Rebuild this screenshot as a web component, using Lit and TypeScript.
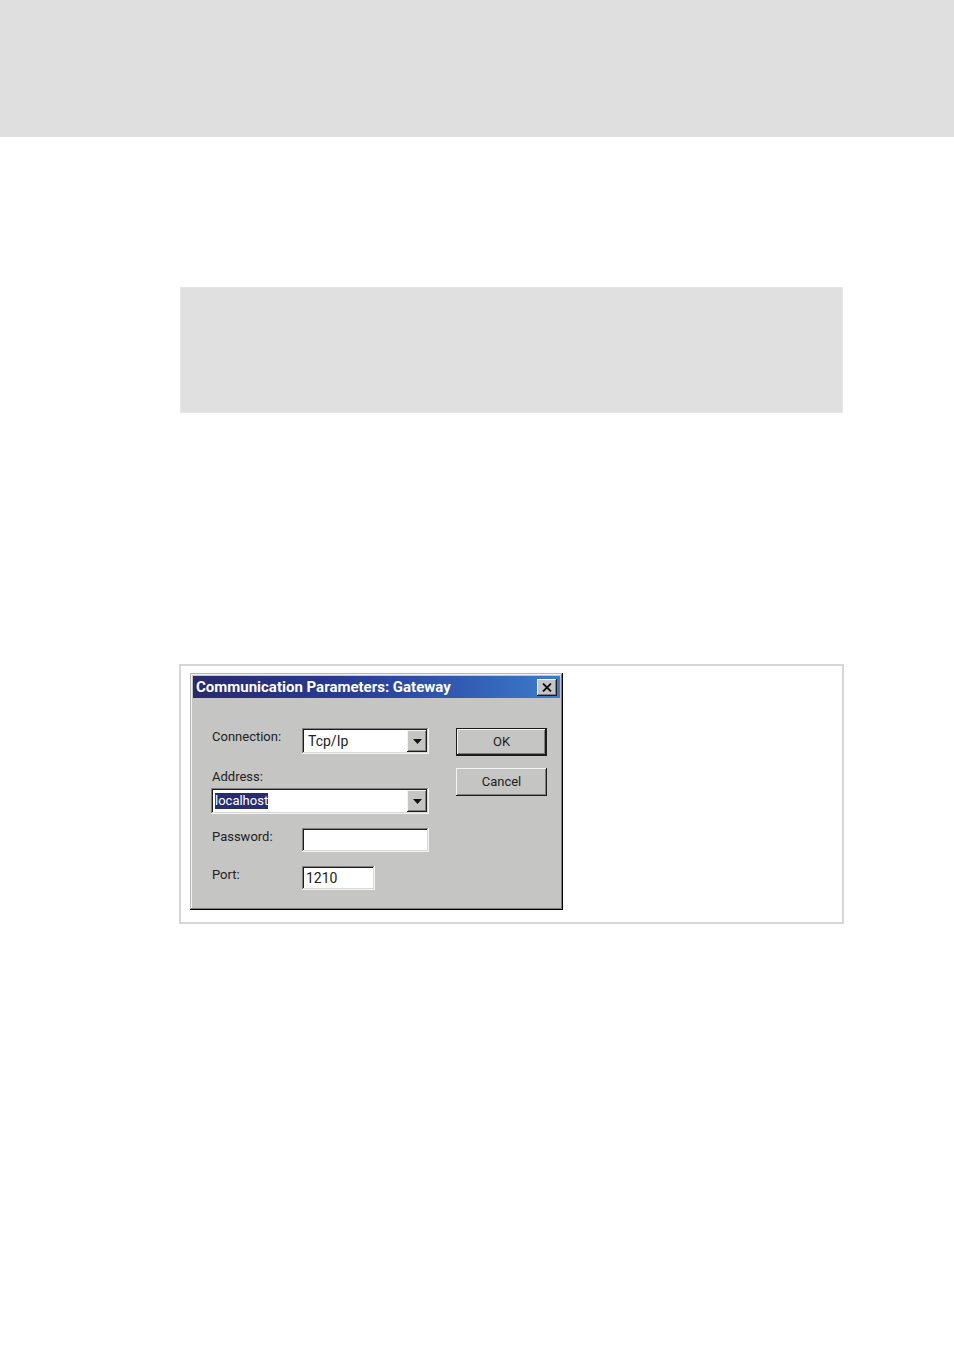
import { LitElement, html, css } from 'lit';
import { customElement, property, query } from 'lit/decorators.js';

const arrow = html`
  <svg width="9" height="5" viewBox="0 0 9 5" aria-hidden="true">
    <path d="M0 0h9L4.5 5z" fill="#111" />
  </svg>
`;

/**
 * Gateway Dialog
 * Classic grey dialog with the communication settings of a gateway
 */
@customElement('gateway-dialog')
export class GatewayDialog extends LitElement {
  static styles = css`
    :host {
      display: block;
      width: max-content;
      --face: #c5c5c3;
      --light: #f4f4f2;
      --shade: #808080;
      --dark: #1c1c1c;
    }

    .dialog {
      box-sizing: border-box;
      padding: 3px;
      background: var(--face);
      color: #222;
      font: 13px/18px Roboto, 'Liberation Sans', sans-serif;
      box-shadow:
        inset -1px -1px #000,
        inset 1px 1px #b4b4b4,
        inset -2px -2px var(--shade),
        inset 2px 2px var(--light);
    }

    .titlebar {
      display: flex;
      align-items: center;
      justify-content: space-between;
      height: 22px;
      padding: 0 3px;
      background: linear-gradient(to right, #282a6c, #283a94 40%, #3058b0 70%, #3c7cca);
    }

    .title {
      margin: 0;
      color: #fff;
      font-size: 15px;
      font-weight: 700;
      line-height: 22px;
    }

    button {
      display: grid;
      place-items: center;
      box-sizing: border-box;
      margin: 0;
      padding: 0;
      border: 0;
      background: var(--face);
      color: inherit;
      font: inherit;
      box-shadow:
        inset -1px -1px var(--dark),
        inset 1px 1px var(--light),
        inset -2px -2px var(--shade);
    }

    .close {
      width: 20px;
      height: 17px;
    }

    .body {
      display: flex;
      gap: 27px;
      padding: 30px 13px 17px 18px;
    }

    .fields {
      display: flex;
      flex-direction: column;
      gap: 14px;
      width: 218px;
    }

    .row {
      display: grid;
      grid-template-columns: 91px minmax(0, 1fr);
      align-items: start;
    }

    .stacked {
      display: grid;
      gap: 2px;
    }

    label {
      padding-left: 1px;
    }

    .field {
      display: flex;
      align-items: center;
      box-sizing: border-box;
      height: 24px;
      padding: 2px;
      background: #fff;
      box-shadow:
        inset -1px -1px var(--light),
        inset 1px 1px var(--shade),
        inset -2px -2px #d8d8d6,
        inset 2px 2px var(--dark);
    }

    .combo {
      height: 26px;
    }

    .port {
      width: 73px;
    }

    input,
    select {
      appearance: none;
      flex: 1;
      box-sizing: border-box;
      min-width: 0;
      margin: 0;
      padding: 0 2px;
      border: 0;
      outline: 0;
      background: none;
      color: inherit;
      font: inherit;
      line-height: 16px;
    }

    select {
      padding: 0 4px;
      font-size: 14px;
    }

    .port input {
      font-size: 14px;
    }

    input::selection {
      background: #282c70;
      color: #fff;
    }

    .drop {
      display: grid;
      place-items: center;
      align-self: stretch;
      width: 20px;
      background: var(--face);
      box-shadow:
        inset -1px -1px var(--dark),
        inset 1px 1px var(--light),
        inset -2px -2px var(--shade);
    }

    /* lies over the end of the select, which takes the click */
    span.drop {
      margin-left: -20px;
      pointer-events: none;
    }

    .actions {
      display: flex;
      flex-direction: column;
      gap: 12px;
    }

    .actions button {
      width: 91px;
      height: 28px;
    }

    .actions .default {
      border: 1px solid var(--dark);
    }
  `;

  @property() heading = 'Communication Parameters: Gateway';

  @query('#address') private address!: HTMLInputElement;

  firstUpdated() {
    this.address.focus({ preventScroll: true });
    this.address.select();
  }

  render() {
    return html`
      <section class="dialog" role="dialog" aria-labelledby="title">
        <header class="titlebar">
          <h1 class="title" id="title">${this.heading}</h1>
          <button class="close" type="button" aria-label="Close">
            <svg width="10" height="9" viewBox="0 0 10 9" aria-hidden="true">
              <path d="M1 .5 9 8.5M9 .5 1 8.5" stroke="#111" stroke-width="1.8" />
            </svg>
          </button>
        </header>

        <form class="body">
          <div class="fields">
            <div class="row">
              <label for="connection">Connection:</label>
              <div class="field combo">
                <select id="connection">
                  <option>Tcp/Ip</option>
                </select>
                <span class="drop">${arrow}</span>
              </div>
            </div>

            <div class="stacked">
              <label for="address">Address:</label>
              <div class="field combo">
                <input id="address" type="text" value="localhost" spellcheck="false" />
                <button class="drop" type="button" aria-label="Show addresses">${arrow}</button>
              </div>
            </div>

            <div class="row">
              <label for="password">Password:</label>
              <div class="field">
                <input id="password" type="password" />
              </div>
            </div>

            <div class="row">
              <label for="port">Port:</label>
              <div class="field port">
                <input id="port" type="text" inputmode="numeric" value="1210" />
              </div>
            </div>
          </div>

          <div class="actions">
            <button class="default" type="button">OK</button>
            <button type="button">Cancel</button>
          </div>
        </form>
      </section>
    `;
  }
}

/**
 * Manual page with a header band, a note block and a framed figure
 */
@customElement('app-root')
export class AppRoot extends LitElement {
  static styles = css`
    :host {
      display: block;
      min-height: 100vh;
      background: #fff;
    }

    .band {
      height: 137px;
      background: #dfdfdf;
    }

    .content {
      padding: 150px 110px 150px 179px;
    }

    .note {
      box-sizing: border-box;
      height: 126px;
      margin: 0 1px 251px;
      border: 1px solid #e6e6e6;
      background: #e0e0e0;
    }

    .figure {
      margin: 0;
      padding: 7px 9px 12px;
      border: 2px solid #d6d6d6;
    }
  `;

  render() {
    return html`
      <header class="band"></header>
      <main class="content">
        <div class="note"></div>
        <figure class="figure">
          <gateway-dialog></gateway-dialog>
        </figure>
      </main>
    `;
  }
}

declare global {
  interface HTMLElementTagNameMap {
    'gateway-dialog': GatewayDialog;
    'app-root': AppRoot;
  }
}
